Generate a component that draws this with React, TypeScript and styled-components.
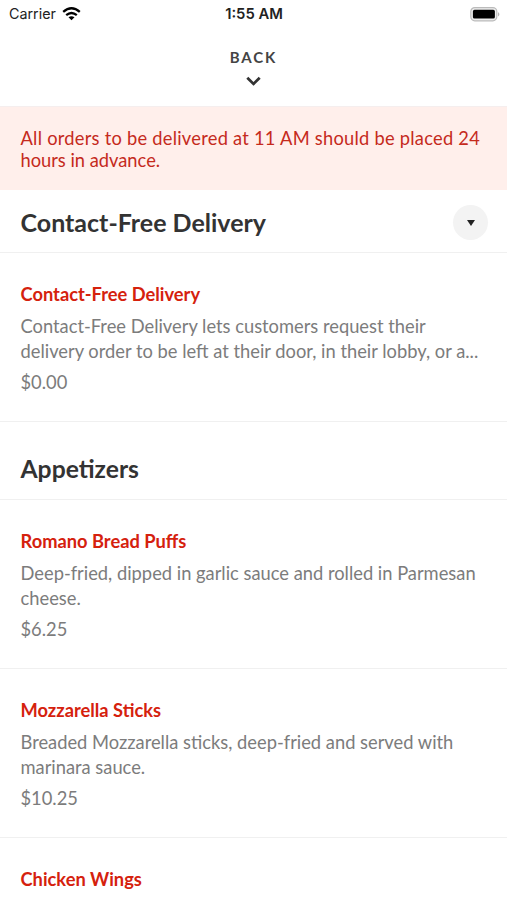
import React from "react";
import styled, { createGlobalStyle } from "styled-components";

const Global = createGlobalStyle`
  *{box-sizing:border-box}
  html,body{margin:0;background:#fff}
  body{font-family:Lato,sans-serif;overflow:hidden}
  h2,h3,p{margin:0}
`;
const Screen = styled.div`width:507px;height:900px;overflow:hidden;background:#fff;`;
const StatusBar = styled.div`
  height:28px;display:grid;grid-template-columns:1fr auto 1fr;align-items:center;
  padding:0 6px 0 9px;font:400 14.3px/28px Inter,sans-serif;color:#222;
`;
const Carrier = styled.div`display:flex;align-items:center;gap:6px;`;
const Clock = styled.div`font-weight:600;font-size:14.8px;margin-left:-2px;`;
const Battery = styled.div`display:flex;justify-content:flex-end;`;
const Back = styled.div`
  height:79px;border-bottom:1px solid #f5eeee;display:flex;flex-direction:column;align-items:center;
  padding:20px 1px 0 0;font-size:15px;line-height:19px;font-weight:700;color:#444;
  svg{margin-top:9px}
`;
const BackLabel = styled.span`letter-spacing:1.9px;padding-left:1px;`;
const Notice = styled.p`
  height:83px;background:#ffefeb;color:#c52a1c;padding:20px 0 0 20.5px;font-size:18.3px;line-height:22px;
`;
const NoticeLine = styled.span<{ $tracking?: number }>`display:block;letter-spacing:${p => p.$tracking ?? 0}px;`;
const Heading = styled.div<{ $h: number; $top: number }>`
  height:${p => p.$h}px;padding:${p => p.$top}px 19px 0 20.5px;border-bottom:1px solid #f0f0f0;
  display:flex;justify-content:space-between;align-items:flex-start;
`;
const Title = styled.h2<{ $size: number }>`font-size:${p => p.$size}px;line-height:34px;font-weight:700;color:#333;`;
const Toggle = styled.div`width:35px;height:35px;border-radius:50%;background:#f3f3f3;display:grid;place-items:center;`;
const Item = styled.div`height:169px;padding:29px 20px 0 20.5px;border-bottom:1px solid #f0f0f0;`;
const Name = styled.h3`font-size:18.3px;line-height:24px;font-weight:700;color:#d5210d;`;
const Desc = styled.p`font-size:18.32px;line-height:24.5px;color:#7c7c7c;margin-top:8px;white-space:nowrap;`;
const Price = styled.p`font-size:18.32px;line-height:24px;color:#7c7c7c;margin-top:7px;`;

const Dish = ({ name, lines, price }: { name: string; lines: string[]; price: string }) => (
  <Item>
    <Name>{name}</Name>
    <Desc>{lines[0]}<br />{lines[1]}</Desc>
    <Price>{price}</Price>
  </Item>
);

export default function App() {
  return (
    <Screen>
      <Global />
      <StatusBar>
        <Carrier>
          <span>Carrier</span>
          <svg width="19" height="14" viewBox="0 0 19 14" fill="none" stroke="#000" strokeWidth="2.3">
            <path d="M1.2 4.9Q9.5-2.3 17.8 4.9M4.2 8.2Q9.5 3.8 14.8 8.2" />
            <path d="M6.5 10.3Q9.5 8.1 12.5 10.3L9.5 13.3Z" fill="#000" stroke="none" />
          </svg>
        </Carrier>
        <Clock>1:55 AM</Clock>
        <Battery>
          <svg width="31" height="15" viewBox="0 0 31 15">
            <rect x=".8" y=".6" width="26" height="13.2" rx="4" fill="#eee" stroke="#bbb" strokeWidth="1.2" />
            <rect x="2.9" y="2.8" width="22" height="8.8" rx="1.6" />
            <path d="M28.1 4.9Q30.7 7.2 28.1 9.5Z" fill="#aaa" />
          </svg>
        </Battery>
      </StatusBar>
      <Back>
        <BackLabel>BACK</BackLabel>
        <svg width="15" height="11" viewBox="0 0 15 11" fill="none" stroke="#333" strokeWidth="2.8"><path d="M1.3 1.8L7.5 7.9L13.7 1.8" /></svg>
      </Back>
      <Notice>
        <NoticeLine $tracking={0.25}>All orders to be delivered at 11 AM should be placed 24</NoticeLine>
        <NoticeLine>hours in advance.</NoticeLine>
      </Notice>
      <Heading $h={63} $top={15}>
        <Title $size={25}>Contact-Free Delivery</Title>
        <Toggle><svg width="8" height="6" viewBox="0 0 8 6"><path d="M0 0H8L4 6Z" fill="#222" /></svg></Toggle>
      </Heading>
      <Dish name="Contact-Free Delivery" lines={["Contact-Free Delivery lets customers request their", "delivery order to be left at their door, in their lobby, or a..."]} price="$0.00" />
      <Heading $h={78} $top={30}><Title $size={24.7}>Appetizers</Title></Heading>
      <Dish name="Romano Bread Puffs" lines={["Deep-fried, dipped in garlic sauce and rolled in Parmesan", "cheese."]} price="$6.25" />
      <Dish name="Mozzarella Sticks" lines={["Breaded Mozzarella sticks, deep-fried and served with", "marinara sauce."]} price="$10.25" />
      <Dish name="Chicken Wings" lines={["", ""]} price="" />
    </Screen>
  );
}
